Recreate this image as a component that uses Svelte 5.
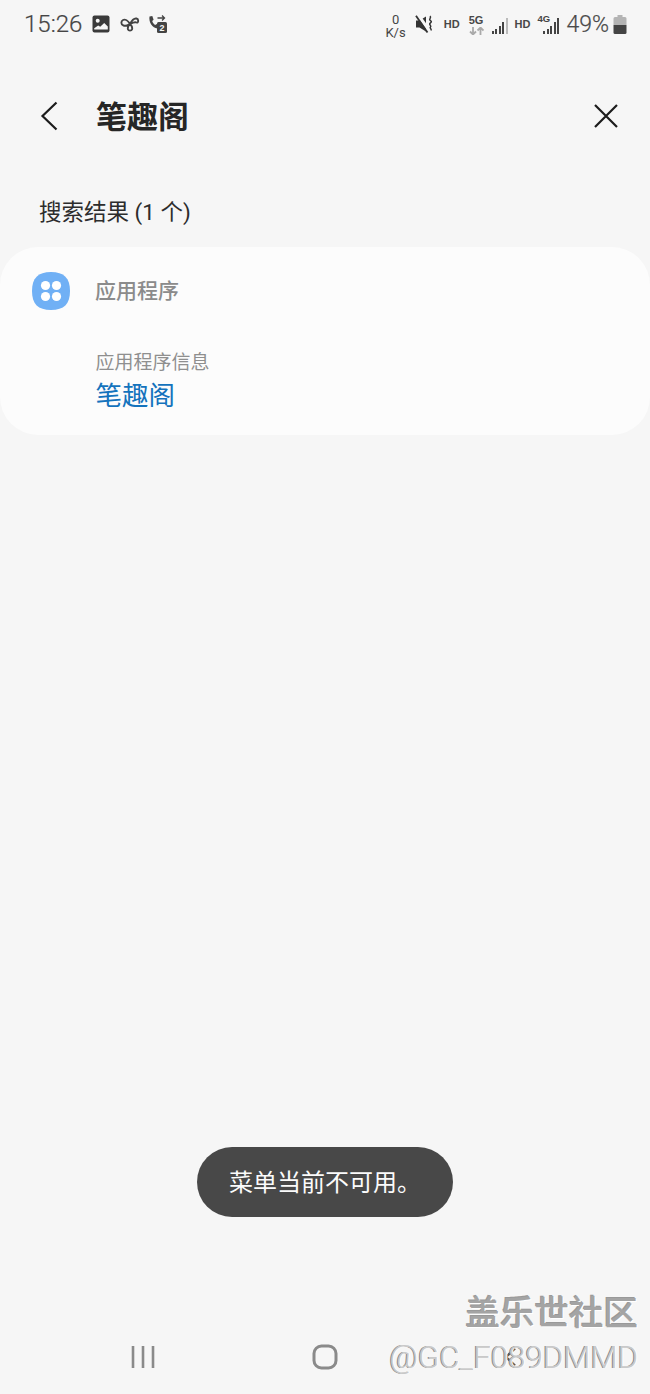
<script>
  const bars = [3, 5, 8, 12, 16];
</script>

<div class="page">
  <div class="status">
    <div class="left">
      <span class="time">15:26</span>
      <svg class="ic" width="18" height="18" viewBox="0 0 18 18"><rect x=".5" y=".5" width="17" height="17" rx="2" fill="#3a3a3a"/><circle cx="5.700" cy="5.800" r="2" fill="#f6f6f6"/><path fill="#f6f6f6" d="M2.200 14.500v-1.200l4-2.800 2 1.200 4-3.700 3.600 3.500v3z"/></svg>
      <svg class="ic loop" width="20" height="15" viewBox="0 0 20 15"><path fill="none" stroke="#444" stroke-width="1.900" d="M10 7C8 3.500 5 2 3 3S.5 7.500 3.500 8.500 8 8 10 7s4.500-2.500 6.500-1.500 2.500-3.500 0-4S11.500 4 10 7c-2 2-2.500 4-2 5.500s3.500 1.500 4 0S12 9 10 7z"/></svg>
      <svg class="ic call" width="20" height="20" viewBox="0 0 20 20"><path fill="#444" d="M1.500 2.500 4.300 2l1.300 3.800-1.400 1.300c.5 1.700 1.500 3 3 4l1.500-1 2.400 2.600-1.600 1.700C4.500 14.500.5 8 1.500 2.500z"/><path fill="none" stroke="#444" stroke-width="1.300" d="M9.500 4h7M14 1.500 16.500 4 14 6.500"/><rect x="9" y="8" width="10" height="11" rx="1.500" fill="#444"/><text x="14" y="17" class="two">2</text></svg>
    </div>
    <div class="right">
      <div class="speed"><span>0</span><span>K/s</span></div>
      <svg class="mute" width="20" height="19" viewBox="0 0 20 19"><path fill="#333" d="M1 5.500h3.500L11 1.500v15l-6.500-4H1z"/><path stroke="#f6f6f6" stroke-width="3.200" d="M3.200 0 14.500 16"/><path stroke="#333" stroke-width="1.800" d="M1 .8 12.500 17.500"/><path fill="none" stroke="#333" stroke-width="1.500" d="M15 1c2 1.500-1.500 3 0 4.200s2 1.500 .2 3 1.800 2.300 .3 3.800 1.500 1.500 .5 3.500"/></svg>
      <span class="hd first">HD</span>
      <div class="net"><span>5G</span><svg width="15" height="8" viewBox="0 0 15 8"><path fill="none" stroke="#aaa" stroke-width="1.800" d="M4 0v7M1 4.500 4 7.500l3-3M11.500 8V1M8.500 3.500l3-3 3 3"/></svg></div>
      <div class="bars sim1">
        {#each bars as h, i}<i class:dim={i === 4} style="height:{h}px"></i>{/each}
      </div>
      <span class="hd second">HD</span>
      <div class="sim2">
        <span class="fourg">4G</span>
        <div class="bars">
          {#each bars as h}<i style="height:{h}px"></i>{/each}
        </div>
      </div>
      <span class="pct">49%</span>
      <svg class="batt" width="14" height="19" viewBox="0 0 14 19"><path fill="#b4b4b4" d="M4.500 0h5v2H12a1.500 1.500 0 0 1 1.500 1.500V10H.500V3.500A1.500 1.500 0 0 1 2 2h2.500z"/><path fill="#444" d="M.500 10h13v7.500A1.500 1.500 0 0 1 12 19H2A1.500 1.500 0 0 1 .500 17.500z"/></svg>
    </div>
  </div>

  <header class="head">
    <svg width="20" height="32" viewBox="0 0 20 32"><path fill="none" stroke="#1c1c1c" stroke-width="2.200" d="M16.500 2.500 2.500 16l14 13.500"/></svg>
    <h1>笔趣阁</h1>
    <svg class="close" width="26" height="26" viewBox="0 0 26 26"><path fill="none" stroke="#1c1c1c" stroke-width="2.200" d="M2 2l22 22M24 2 2 24"/></svg>
  </header>

  <p class="count">搜索结果 (1 个)</p>

  <section class="card">
    <div class="cat">
      <svg width="38" height="38" viewBox="0 0 38 38"><path fill="#70b0f5" d="M19 0C32 0 38 6 38 19S32 38 19 38 0 32 0 19 6 0 19 0z"/><g fill="#fff"><circle cx="13.500" cy="13.500" r="4.600"/><circle cx="24.500" cy="13.500" r="4.600"/><circle cx="13.500" cy="24.500" r="4.600"/><circle cx="24.500" cy="24.500" r="4.600"/></g></svg>
      <span>应用程序</span>
    </div>
    <div class="item">
      <span class="sub">应用程序信息</span>
      <span class="name">笔趣阁</span>
    </div>
  </section>

  <div class="spacer"></div>
  <div class="toast">菜单当前不可用。</div>

  <nav class="nav">
    <svg class="recent" width="26" height="24" viewBox="0 0 26 24"><path stroke="#8a8a8a" stroke-width="2.600" d="M3 1v22M13 1v22M23 1v22"/></svg>
    <svg class="home" width="26" height="26" viewBox="0 0 26 26"><rect x="2" y="2" width="22" height="22" rx="7.500" fill="none" stroke="#8a8a8a" stroke-width="3"/></svg>
    <svg class="back" width="14" height="20" viewBox="0 0 14 20"><path fill="none" stroke="#555" stroke-width="2.400" d="M12 1.500 3 10l9 8.500"/></svg>
  </nav>

  <div class="mark">
    <span class="m1">盖乐世社区</span>
    <span class="m2">@GC_F089DMMD</span>
  </div>
</div>

<style>
  :global(body) { margin: 0; background: #f6f6f6; }
  .page {
    position: relative;
    width: 650px;
    height: 1394px;
    display: flex;
    flex-direction: column;
    overflow: hidden;
    background: #f6f6f6;
    font-family: Roboto, "Noto Sans CJK SC", sans-serif;
    color: #252525;
  }
  .status {
    height: 48px;
    padding: 0 23px 0 24px;
    display: flex;
    align-items: center;
    justify-content: space-between;
    color: #454545;
  }
  .left, .right { display: flex; align-items: center; }
  .time { font-size: 24px; font-weight: 300; margin-right: 10px; -webkit-text-stroke: 0.2px #454545; }
  .loop { margin: 0 8px 0 10px; }
  .two { font: 700 9px "Liberation Sans", sans-serif; fill: #f6f6f6; text-anchor: middle; }
  .speed {
    display: flex; flex-direction: column; align-items: center;
    font-size: 13px; line-height: 13px; margin-right: 9px; margin-top: 3px;
  }
  .mute { margin-top: 1px; }
  .hd { font: 700 11px "Liberation Sans", sans-serif; color: #484848; }
  .hd.first { margin: 0 9px; }
  .hd.second { margin-left: 7px; }
  .net {
    display: flex; flex-direction: column; align-items: center; gap: 1px;
    font: 700 11px/11px "Liberation Sans", sans-serif; margin-top: 1px; color: #484848;
  }
  .bars { display: flex; align-items: flex-end; gap: 1.500px; height: 16px; }
  .bars i { width: 2px; background: #444; }
  .bars i.dim { background: #bbb; }
  .sim1 { margin-left: 8px; margin-top: 4px; }
  .sim2 { position: relative; margin-left: 7px; width: 22px; height: 18px; display: flex; align-items: flex-end; justify-content: flex-end; margin-top: 2px; }
  .fourg { position: absolute; left: 0; top: -3px; font: 700 9.500px "Liberation Sans", sans-serif; color: #444; background: #f6f6f6; padding-right: 1px; }
  .pct { font-size: 23px; margin-left: 7px; color: #4a4a4a; font-weight: 300; -webkit-text-stroke: 0.2px #4a4a4a; }
  .batt { margin-left: 4px; margin-top: 1px; }

  .head {
    height: 40px;
    margin-top: 48px;
    padding-left: 40px;
    padding-right: 31px;
    display: flex;
    align-items: center;
  }
  .head h1 {
    margin: 3px 0 0 36px;
    font-size: 31px;
    font-weight: 700;
    line-height: 40px;
    color: #262626;
    flex: 1;
  }
  .count {
    margin: 53px 0 0 39px;
    font-size: 22.500px;
    line-height: 46px;
    color: #2c2c2c;
    height: 46px;
  }
  .card {
    margin-top: 12px;
    height: 188px;
    box-sizing: border-box;
    background: #fcfcfc;
    border-radius: 38px;
    padding: 25px 0 0 32px;
  }
  .cat { display: flex; align-items: center; gap: 26px; height: 38px; }
  .cat span { font-size: 21px; font-weight: 500; color: #8b8b8b; margin: -4px 0 0 -1px; }
  .item { display: flex; flex-direction: column; margin: 41px 0 0 64px; }
  .sub { font-size: 19px; line-height: 24px; color: #8f8f8f; margin-left: -0.500px; }
  .name { font-size: 26.500px; line-height: 42px; color: #1473bd; margin-left: -0.500px; }

  .spacer { flex: 1; }
  .toast {
    align-self: center;
    width: 256px;
    height: 70px;
    line-height: 73px;
    box-sizing: border-box;
    padding-left: 32px;
    border-radius: 35px;
    background: #484848;
    color: #fbfbfb;
    font-size: 24px;
    margin-bottom: 177px;
  }
  .nav {
    position: absolute;
    left: 0;
    right: 0;
    bottom: 24px;
    height: 26px;
    display: grid;
    grid-template-columns: repeat(3, 1fr);
    place-items: center;
  }
  .recent { justify-self: start; margin-left: 130px; }
  .back { justify-self: end; margin-right: 133px; }
  .mark {
    position: absolute;
    right: 12px;
    top: 1293px;
    display: flex;
    flex-direction: column;
    align-items: flex-end;
  }
  .m1 {
    font-size: 34.500px; line-height: 40px; font-weight: 500; color: #a4a4a4;
    text-shadow: 1px 1px 0 #fff, -1px -1px 0 #999;
  }
  .m2 {
    font-size: 31.300px; line-height: 36px; margin-top: 7px; color: #c9c9c9; font-weight: 300;
    text-shadow: 1px 0 0 #fff, -1px 0 0 #888;
  }
</style>
